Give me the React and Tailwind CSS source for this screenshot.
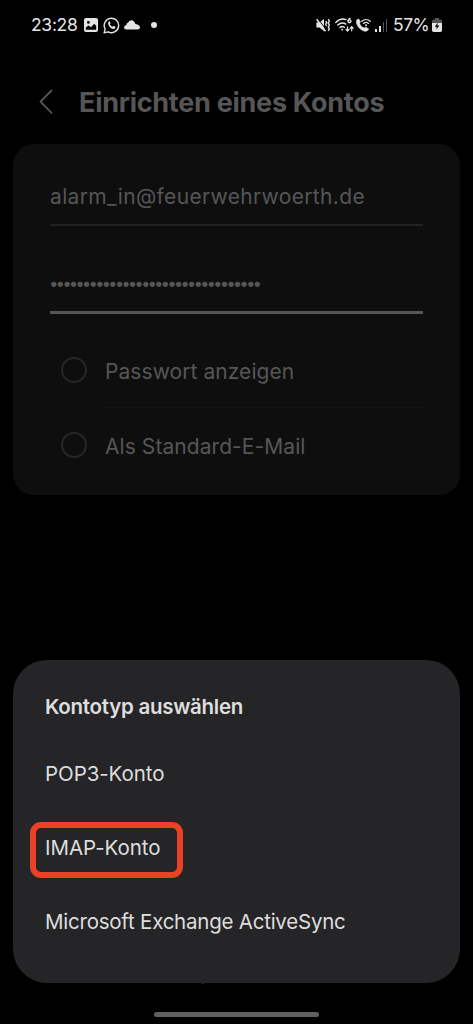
const PASSWORD_MASK = '•'.repeat(32);

const accountTypes = [
  { id: 'pop3', label: 'POP3-Konto', tracking: 'tracking-[-0.07px]' },
  { id: 'imap', label: 'IMAP-Konto', tracking: 'tracking-[-0.05px]', highlighted: true },
  { id: 'eas', label: 'Microsoft Exchange ActiveSync', tracking: 'tracking-[-0.23px]' },
];

const options = [
  { id: 'show', label: 'Passwort anzeigen' },
  { id: 'default', label: 'Als Standard-E-Mail' },
];

function StatusBar() {
  return (
    <header className="flex h-[50px] shrink-0 items-center pl-[31px] pr-[31px] text-[#e4e4e4]">
      <span className="w-[46px] whitespace-nowrap text-[17.5px] tracking-[-0.3px]">23:28</span>

      {/* gallery */}
      <svg className="ml-[7px]" width="14" height="14" viewBox="0 0 14 14">
        <rect width="14" height="14" rx="2" fill="currentColor" />
        <circle cx="4.4" cy="4.4" r="1.4" fill="#000" />
        <path d="M1.8 11.8V9.6L4.6 7.4 7 9.2l3.2-3.4 2 2.2v3.8z" fill="#000" />
      </svg>

      {/* whatsapp */}
      <svg className="ml-[5px]" width="17" height="17" viewBox="0 0 17 17" fill="none" stroke="currentColor">
        <path d="M1.1 15.9l1.1-3.8a7.2 7.2 0 1 1 2.8 2.7z" strokeWidth="1.4" strokeLinejoin="round" />
        <path d="M5.3 5.2c.6-1.1 1.3-1.2 1.7-.4l.5 1.2c.2.4-.6 1-.6 1.3.5 1.2 1.4 2 2.6 2.5.4.1 1-.9 1.4-.7l1.4.7c.6.4-.2 1.8-1.2 2.1-2.5.6-6.5-3-5.8-6.7z" fill="currentColor" stroke="none" />
      </svg>

      {/* cloud */}
      <svg className="ml-[4px]" width="16" height="10" viewBox="0 0 16 10" fill="currentColor">
        <path d="M2.500 9.500Q0 9.500 0 7.400 0 5.400 2.300 4.900 2.200 3.200 4.200 2.600 5.300.3 7.500.3q2.600 0 3.900 3.600Q16 4.800 16 7.400q0 2.100-2.500 2.100z" />
      </svg>
      <span className="ml-[11px] size-[6px] rounded-full bg-[#e4e4e4]" />

      <div className="ml-auto flex items-center">
        {/* muted, vibrate */}
        <svg width="14" height="14" viewBox="0 0 14 14" fill="none" stroke="currentColor">
          <path d="M.4 4.500h3L8 1v12L3.400 9.500h-3z" fill="currentColor" stroke="none" />
          <path d="M1.900.6l8.600 11.600" stroke="#000" strokeWidth="1" />
          <path d="M.7 1.300l8.800 12" strokeWidth="1.500" />
          <path d="M9.700 3.200l1 1.500-1 1.600 1 1.600M12.300 1.200l1 1.900-1 1.900 1 2-1 1.900 1 2-1 1.900" strokeWidth="1.400" />
        </svg>

        {/* wifi 6 */}
        <svg className="ml-[5px]" width="19" height="16" viewBox="0 0 19 16" fill="none" stroke="currentColor" strokeWidth="1.400" strokeLinecap="round">
          <path d="M.8 5.400C3.800 2.200 8 1.400 11 2.600M2.800 8.100c2.400-2.300 5.600-2.600 8-1M5 10.500c1.300-1.200 3-1.300 4.300-.2" />
          <path d="M7.200 12.400v.3" strokeWidth="1.700" />
          <path d="M15 1.300c-1.400.6-1.900 1.600-1.900 2.800" />
          <circle cx="14.500" cy="4.300" r="1.400" />
          <path d="M12.500 9.800v4M11 12.300l1.500 1.700 1.500-1.700M16.700 13.800v-4M15.200 11.300l1.500-1.700 1.500 1.700" strokeWidth="1.200" />
        </svg>

        {/* wifi calling */}
        <svg className="ml-[2px]" width="15" height="14" viewBox="0 0 15 14" fill="none" stroke="currentColor">
          <path d="M.5 3C1 1.500 2 .9 2.700 1l1.600 2.700c.2.5-.8 1.400-.8 1.800.9 2.200 2.400 3.700 4.600 4.500.5.1 1.100-1 1.700-.8l2.600 1.500c.5.5-.8 2.300-2.400 2.500C5.600 13.500.1 8 .5 3z" fill="currentColor" strokeWidth=".7" />
          <path d="M5.800 3.300c2.400-2.200 6-2.200 8.400 0M7.500 5.400c1.500-1.300 3.500-1.300 5 0" strokeWidth="1.300" strokeLinecap="round" />
          <circle cx="10" cy="7.200" r="1" fill="currentColor" stroke="none" />
        </svg>

        {/* signal */}
        <div className="ml-[4px] flex items-end gap-[2px]">
          <span className="h-[3px] w-[2px] bg-current" />
          <span className="h-[6px] w-[2px] bg-current" />
          <span className="h-[10px] w-[1px] bg-[#555]" />
          <span className="h-[13px] w-[1px] bg-[#555]" />
        </div>

        <span className="ml-[6px] w-[36px] whitespace-nowrap text-[17.5px] tracking-[-0.5px]">57%</span>

        {/* battery */}
        <svg className="ml-[3px]" width="10" height="14" viewBox="0 0 10 14">
          <path d="M3 0h4v1.500h1.500Q10 1.500 10 3v3H0V3q0-1.500 1.500-1.500H3z" fill="#555" />
          <path d="M0 5h10v7.300q0 1.700-1.700 1.700H1.700Q0 14 0 12.300z" fill="currentColor" />
          <path d="M5.800 4.500L2.800 8.700h2l-.5 3.100 3-4.300H5.300z" fill="#000" />
        </svg>
      </div>
    </header>
  );
}

function AccountForm() {
  return (
    <section className="mx-[13px] h-[351px] shrink-0 rounded-[21px] bg-[#0e0e0e] px-[37px] text-[21px] text-[#565656]">
      <div className="flex h-[82px] items-end border-b-2 border-[#212121] pb-[11px]">
        <span className="whitespace-nowrap leading-[32px] tracking-[0.36px]">alarm_in@feuerwehrwoerth.de</span>
      </div>
      <div className="flex h-[88px] items-end border-b-[3px] border-[#565656] pb-[18px]">
        <span className="-ml-px whitespace-nowrap text-[17px] leading-[20px] tracking-[-3px]">{PASSWORD_MASK}</span>
      </div>

      <div className="pt-[19px]">
        {options.map((option, i) => (
          <div key={option.id} className="flex h-[75px] pl-[11px]">
            <span className="mt-[24px] size-[26px] shrink-0 rounded-full border-2 border-[#272727]" />
            <span
              className={`ml-[18px] flex-1 whitespace-nowrap pt-[23px] leading-[32px] tracking-[0.07px] ${
                i === 0 ? 'border-b border-[#141414]' : ''
              }`}
            >
              {option.label}
            </span>
          </div>
        ))}
      </div>
    </section>
  );
}

function AccountTypeSheet() {
  return (
    <section className="mx-[13px] mt-auto h-[323px] shrink-0 rounded-[34px] bg-[#252527] pl-[17px] pt-[31px] text-[20.5px] text-[#dedede]">
      <h2 className="whitespace-nowrap pl-[15px] font-semibold leading-[32px] tracking-[-0.27px]">Kontotyp auswählen</h2>
      <ul className="mt-[25px] flex flex-col gap-[18px]">
        {accountTypes.map((type) => (
          <li key={type.id} className="flex h-[56px] items-center">
            <span
              className={`flex h-full items-center whitespace-nowrap ${type.tracking} ${
                type.highlighted
                  ? 'w-[153px] rounded-[11px] border-[6px] border-[#eb4127] pb-[4px] pl-[9px]'
                  : 'pb-[4px] pl-[15px]'
              }`}
            >
              {type.label}
            </span>
          </li>
        ))}
      </ul>
    </section>
  );
}

export default function App() {
  return (
    <main className="flex h-[1024px] w-[473px] flex-col overflow-hidden bg-black font-['Inter','Noto_Sans',sans-serif]">
      <StatusBar />

      <div className="flex h-[94px] shrink-0 items-center pl-[39px] pt-[10px] text-[#565656]">
        <svg width="14" height="26" viewBox="0 0 14 26" fill="none" stroke="currentColor" strokeWidth="1.8" strokeLinecap="round" strokeLinejoin="round">
          <path d="M12.500 1.500L1.500 12.700l11 11.200" />
        </svg>
        <h1 className="ml-[26px] mt-[3px] whitespace-nowrap text-[27px] font-bold tracking-[-0.27px]">Einrichten eines Kontos</h1>
      </div>

      <AccountForm />
      <AccountTypeSheet />

      {/* gesture bar */}
      <div className="flex h-[41px] shrink-0 flex-col">
        <span className="ml-[201px] h-px w-[3px] bg-[#222]" />
        <span className="ml-[154px] mt-[28px] h-[5px] w-[165px] rounded-full bg-[#606060]" />
      </div>
    </main>
  );
}
